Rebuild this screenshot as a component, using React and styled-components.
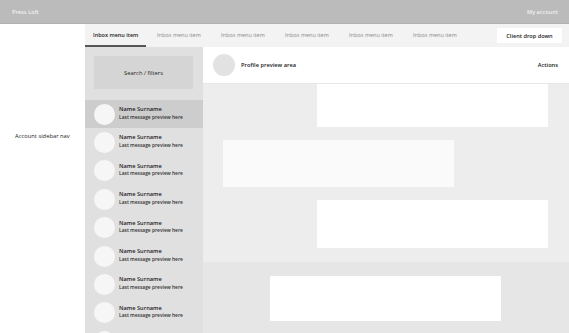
import React from "react";
import styled, { createGlobalStyle } from "styled-components";

const GlobalStyle = createGlobalStyle`
  html, body {
    margin: 0;
    padding: 0;
    background: #ffffff;
  }
  body {
    font-family: "Open Sans", "Liberation Sans", sans-serif;
    color: #222;
  }
`;

const Page = styled.div`
  display: flex;
  flex-direction: column;
  width: 569px;
  height: 333px;
  overflow: hidden;
`;

const TopBar = styled.div`
  display: flex;
  align-items: center;
  justify-content: space-between;
  height: 23px;
  padding: 0 11px 0 12px;
  background: #bbbbbb;
  border-bottom: 1px solid #b0b0b0;
  color: #ffffff;
  font-size: 5.8px;
  flex-shrink: 0;
`;

const Body = styled.div`
  display: grid;
  grid-template-columns: 85px 1fr;
  flex: 1;
  min-height: 0;
`;

const AccountNav = styled.div`
  padding: 108px 0 0 15px;
  font-size: 5.8px;
  color: #222;
`;

const Workspace = styled.div`
  display: flex;
  flex-direction: column;
  min-height: 0;
`;

const TabBar = styled.div`
  display: flex;
  align-items: stretch;
  gap: 3px;
  height: 23px;
  background: #f3f3f3;
  flex-shrink: 0;
`;

const Tab = styled.div`
  display: flex;
  align-items: center;
  width: 61px;
  padding-left: 8px;
  box-sizing: border-box;
  font-size: 5.5px;
  white-space: nowrap;
  color: ${p => (p.active ? "#222" : "#888")};
  font-weight: ${p => (p.active ? 600 : 400)};
  border-bottom: 2px solid ${p => (p.active ? "#555" : "transparent")};
`;

const ClientDrop = styled.div`
  display: flex;
  align-items: center;
  justify-content: center;
  align-self: center;
  margin-left: auto;
  margin-right: 7px;
  width: 65px;
  height: 15px;
  background: #ffffff;
  font-size: 5.6px;
  font-weight: 600;
  color: #222;
`;

const Inbox = styled.div`
  display: grid;
  grid-template-columns: 118px 1fr;
  flex: 1;
  min-height: 0;
`;

const ListColumn = styled.div`
  display: flex;
  flex-direction: column;
  background: #e0e0e0;
  overflow: hidden;
`;

const SearchBox = styled.div`
  display: flex;
  align-items: center;
  justify-content: center;
  height: 33px;
  margin: 9px 10px 11px 9px;
  background: #d5d5d5;
  font-size: 5.8px;
  color: #222;
  flex-shrink: 0;
`;

const Row = styled.div`
  display: flex;
  align-items: center;
  gap: 4px;
  height: 28.4px;
  padding-left: 9px;
  flex-shrink: 0;
  background: ${p => (p.selected ? "#cdcdcd" : "transparent")};
`;

const Avatar = styled.div`
  width: ${p => p.size || 21}px;
  height: ${p => p.size || 21}px;
  border-radius: 50%;
  background: ${p => p.tone || "#f6f6f6"};
  flex-shrink: 0;
`;

const RowText = styled.div`
  display: flex;
  flex-direction: column;
  gap: 2px;
  line-height: 1.15;
  margin-top: -2px;
`;

const Name = styled.div`
  font-size: 5.7px;
  font-weight: 600;
  color: #222;
`;

const Preview = styled.div`
  font-size: 4.9px;
  font-weight: 600;
  color: #333;
`;

const Main = styled.div`
  display: flex;
  flex-direction: column;
  min-height: 0;
`;

const ProfileHeader = styled.div`
  display: flex;
  align-items: center;
  gap: 6px;
  height: 36px;
  padding: 0 11px 0 10px;
  background: #ffffff;
  border-bottom: 1px solid #e6e6e6;
  font-size: 5.7px;
  font-weight: 600;
  flex-shrink: 0;
`;

const Actions = styled.div`
  margin-left: auto;
`;

const Conversation = styled.div`
  display: flex;
  flex-direction: column;
  gap: 13px;
  height: 178px;
  padding: 0 21px 0 20px;
  background: #ededed;
  flex-shrink: 0;
  box-sizing: border-box;
`;

const Bubble = styled.div`
  width: 231px;
  height: ${p => p.h}px;
  align-self: ${p => (p.mine ? "flex-end" : "flex-start")};
  background: ${p => (p.mine ? "#ffffff" : "#fafafa")};
  flex-shrink: 0;
`;

const Composer = styled.div`
  display: flex;
  justify-content: center;
  flex: 1;
  padding-top: 14px;
  background: #e6e6e6;
`;

const ComposerBox = styled.div`
  width: 231px;
  height: 45px;
  margin-right: 1px;
  background: #ffffff;
`;

const tabs = [
  "Inbox menu item",
  "Inbox menu item",
  "Inbox menu item",
  "Inbox menu item",
  "Inbox menu item",
  "Inbox menu item"
];

export default function App() {
  const rows = Array.from({ length: 9 });

  return (
    <Page>
      <GlobalStyle />
      <TopBar>
        <span>Press Loft</span>
        <span>My account</span>
      </TopBar>
      <Body>
        <AccountNav>Account sidebar nav</AccountNav>
        <Workspace>
          <TabBar>
            {tabs.map((t, idx) => (
              <Tab key={idx} active={idx === 0}>
                {t}
              </Tab>
            ))}
            <ClientDrop>Client drop down</ClientDrop>
          </TabBar>
          <Inbox>
            <ListColumn>
              <SearchBox>Search / filters</SearchBox>
              {rows.map((_, idx) => (
                <Row key={idx} selected={idx === 0}>
                  <Avatar />
                  <RowText>
                    <Name>Name Surname</Name>
                    <Preview>Last message preview here</Preview>
                  </RowText>
                </Row>
              ))}
            </ListColumn>
            <Main>
              <ProfileHeader>
                <Avatar size={22} tone="#e2e2e2" />
                <span>Profile preview area</span>
                <Actions>Actions</Actions>
              </ProfileHeader>
              <Conversation>
                <Bubble mine h={43} />
                <Bubble h={47} />
                <Bubble mine h={48} />
              </Conversation>
              <Composer>
                <ComposerBox />
              </Composer>
            </Main>
          </Inbox>
        </Workspace>
      </Body>
    </Page>
  );
}
